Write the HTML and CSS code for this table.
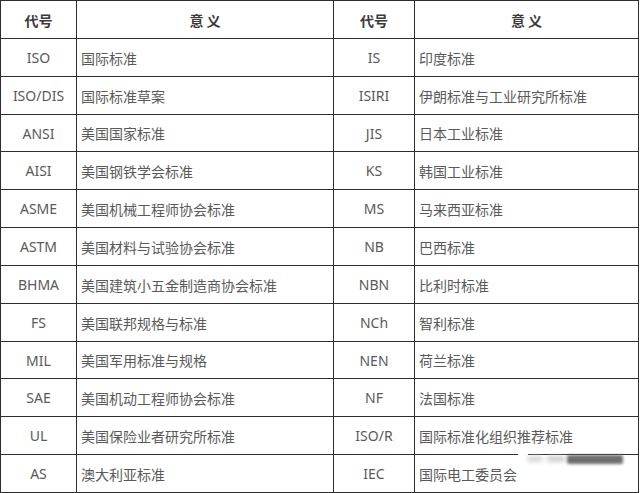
FILE: index.html
```html
<!DOCTYPE html>
<html lang="zh">
<head>
<meta charset="utf-8">
<link rel="stylesheet" href="styles.css">
</head>
<body>
<div class="page">
  <div class="grid">
    <div class="cell head">代号</div><div class="cell head">意 义</div><div class="cell head">代号</div><div class="cell head">意 义</div>
    <div class="cell code">ISO</div><div class="cell text">国际标准</div><div class="cell code">IS</div><div class="cell text">印度标准</div>
    <div class="cell code">ISO/DIS</div><div class="cell text">国际标准草案</div><div class="cell code">ISIRI</div><div class="cell text">伊朗标准与工业研究所标准</div>
    <div class="cell code">ANSI</div><div class="cell text">美国国家标准</div><div class="cell code">JIS</div><div class="cell text">日本工业标准</div>
    <div class="cell code">AISI</div><div class="cell text">美国钢铁学会标准</div><div class="cell code">KS</div><div class="cell text">韩国工业标准</div>
    <div class="cell code">ASME</div><div class="cell text">美国机械工程师协会标准</div><div class="cell code">MS</div><div class="cell text">马来西亚标准</div>
    <div class="cell code">ASTM</div><div class="cell text">美国材料与试验协会标准</div><div class="cell code">NB</div><div class="cell text">巴西标准</div>
    <div class="cell code">BHMA</div><div class="cell text">美国建筑小五金制造商协会标准</div><div class="cell code">NBN</div><div class="cell text">比利时标准</div>
    <div class="cell code">FS</div><div class="cell text">美国联邦规格与标准</div><div class="cell code">NCh</div><div class="cell text">智利标准</div>
    <div class="cell code">MIL</div><div class="cell text">美国军用标准与规格</div><div class="cell code">NEN</div><div class="cell text">荷兰标准</div>
    <div class="cell code">SAE</div><div class="cell text">美国机动工程师协会标准</div><div class="cell code">NF</div><div class="cell text">法国标准</div>
    <div class="cell code">UL</div><div class="cell text">美国保险业者研究所标准</div><div class="cell code">ISO/R</div><div class="cell text">国际标准化组织推荐标准</div>
    <div class="cell code">AS</div><div class="cell text">澳大利亚标准</div><div class="cell code">IEC</div><div class="cell text">国际电工委员会</div>
  </div>
  <div class="watermark">
    <span class="wm-gap"></span>
    <span class="wm-blob1"></span>
    <span class="wm-blob2"></span>
    <span class="wm-bar"></span>
  </div>
</div>
</body>
</html>
```
FILE: styles.css
```css
html, body {
  margin: 0;
  padding: 0;
  background: #ffffff;
}
.page {
  position: relative;
  width: 640px;
  height: 493px;
  overflow: hidden;
}
.grid {
  display: grid;
  grid-template-columns: 75px 256px 80px 223px;
  grid-template-rows: 37px 37px 37px 36px 37px 37px 37px 37px 37px 36px 37px 37px 37px;
  gap: 1px;
  padding: 1px;
  width: 637px;
  background: #2e2e2e;
  font-family: "Noto Sans CJK SC", "Noto Sans", sans-serif;
  font-size: 14px;
  color: #5a5a5a;
}
.cell {
  background: #ffffff;
  display: flex;
  align-items: center;
  white-space: nowrap;
}
.head {
  justify-content: center;
  font-weight: bold;
  color: #3a3a3a;
  font-size: 14px;
}
.code {
  justify-content: center;
  font-family: "Noto Sans", "Noto Sans CJK SC", sans-serif;
}
.text {
  padding-left: 4px;
}
.watermark {
  position: absolute;
  left: 515px;
  top: 452px;
  width: 125px;
  height: 20px;
}
.watermark span {
  position: absolute;
  display: block;
}
.wm-gap {
  left: 3px;
  top: 1px;
  width: 10px;
  height: 3px;
  background: #ffffff;
}
.wm-blob1 {
  left: 12px;
  top: 4px;
  width: 16px;
  height: 6px;
  background: #d8d8d8;
  filter: blur(2px);
  border-radius: 3px;
}
.wm-blob2 {
  left: 32px;
  top: 4px;
  width: 18px;
  height: 6px;
  background: #cfcfcf;
  filter: blur(2px);
  border-radius: 3px;
}
.wm-bar {
  left: 52px;
  top: 3px;
  width: 56px;
  height: 9px;
  background: #6e6e6e;
  filter: blur(1.5px);
  border-radius: 2px;
}
```
